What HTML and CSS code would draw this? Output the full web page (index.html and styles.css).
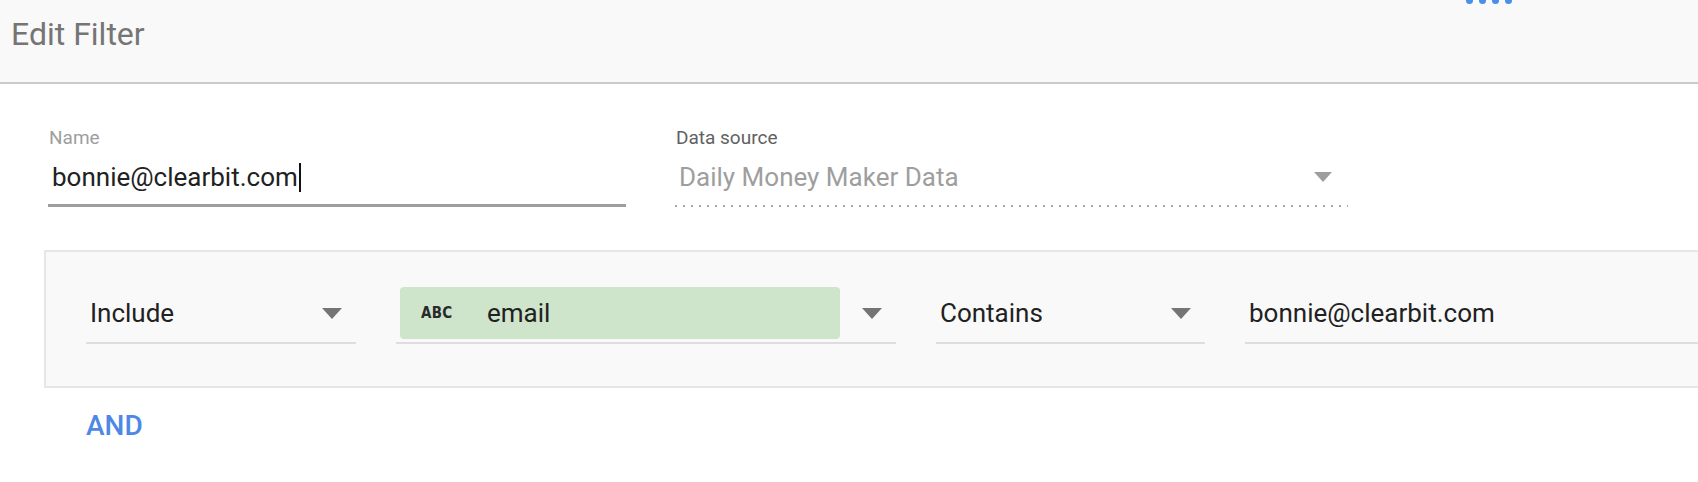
FILE: index.html
```html
<!DOCTYPE html>
<html>
<head>
<meta charset="utf-8">
<title>Edit Filter</title>
<link rel="stylesheet" href="styles.css">
</head>
<body>
<header class="header">
  <h1 class="title">Edit Filter</h1>
  <div class="loader"><span></span><span></span><span></span><span></span></div>
</header>

<section class="fields">
  <div class="field name-field">
    <div class="field-label">Name</div>
    <div class="field-input"><span class="value">bonnie@clearbit.com</span><span class="caret"></span></div>
  </div>
  <div class="field source-field">
    <div class="field-label dark">Data source</div>
    <div class="field-input select">
      <span class="value muted">Daily Money Maker Data</span>
      <span class="tri tri-light"></span>
    </div>
    <div class="dotted"></div>
  </div>
</section>

<section class="filter-box">
  <div class="clause">
    <div class="sel sel-include"><span class="sel-text">Include</span><span class="tri"></span></div>
    <div class="sel sel-field">
      <span class="chip"><span class="abc">ABC</span><span class="chip-text">email</span></span>
      <span class="tri"></span>
    </div>
    <div class="sel sel-op"><span class="sel-text">Contains</span><span class="tri"></span></div>
    <div class="sel sel-value"><span class="sel-text">bonnie@clearbit.com</span></div>
  </div>
</section>

<div class="and">AND</div>
</body>
</html>
```

FILE: styles.css
```css
html, body {
  margin: 0;
  padding: 0;
}
body {
  background: #ffffff;
  font-family: Roboto, "Noto Sans", sans-serif;
  color: #212121;
  overflow: hidden;
  width: 1698px;
  height: 482px;
}

.header {
  position: relative;
  height: 84px;
  box-sizing: border-box;
  background: #f9f9f9;
  border-bottom: 2px solid #cacaca;
  padding: 15px 11px 0;
}
.title {
  margin: 0;
  font-weight: 400;
  font-size: 32px;
  line-height: 38px;
  color: #757575;
}
.loader {
  position: absolute;
  left: 1466px;
  top: -3px;
  display: flex;
  gap: 6px;
}
.loader span {
  width: 7px;
  height: 7px;
  border-radius: 50%;
  background: #4a8fe7;
}

.fields {
  display: flex;
  gap: 49px;
  padding-left: 48px;
  margin-top: 42px;
}
.field-label {
  font-size: 19px;
  line-height: 24px;
  height: 24px;
  color: #9e9e9e;
  padding-left: 1px;
}
.field-label.dark {
  color: #616161;
}
.field-input {
  display: flex;
  align-items: center;
  height: 54px;
  font-size: 26px;
  padding-left: 4px;
}
.name-field {
  width: 578px;
}
.name-field .field-input {
  border-bottom: 3px solid #9e9e9e;
}
.caret {
  display: inline-block;
  width: 2px;
  height: 29px;
  background: #111;
  margin-left: 1px;
}
.source-field {
  width: 673px;
}
.select {
  justify-content: space-between;
  padding-right: 16px;
}
.value.muted {
  color: #9e9e9e;
}
.dotted {
  height: 2px;
  margin-top: 1px;
  background-image: repeating-linear-gradient(to right, #a8a8a8 0 2px, transparent 2px 8px);
}

.tri {
  width: 0;
  height: 0;
  border-left: 10px solid transparent;
  border-right: 10px solid transparent;
  border-top: 11px solid #757575;
  flex: none;
}
.tri-light {
  border-top-color: #9e9e9e;
  border-left-width: 9px;
  border-right-width: 9px;
  border-top-width: 10px;
}

.filter-box {
  margin-top: 43px;
  margin-left: 44px;
  margin-right: -40px;
  height: 138px;
  box-sizing: border-box;
  background: #f9f9f9;
  border: 2px solid #e6e6e6;
  padding: 35px 0 0 40px;
}
.clause {
  display: flex;
  gap: 40px;
}
.sel {
  display: flex;
  align-items: center;
  justify-content: space-between;
  height: 52px;
  padding-bottom: 3px;
  border-bottom: 2px solid #dedede;
  font-size: 26px;
  color: #212121;
  box-sizing: content-box;
}
.sel-text {
  padding-left: 4px;
}
.sel-include {
  width: 256px;
  padding-right: 14px;
}
.sel-field {
  width: 486px;
  padding-right: 14px;
}
.sel-op {
  width: 255px;
  padding-right: 14px;
}
.sel-value {
  flex: 1;
}
.chip {
  display: flex;
  align-items: center;
  width: 440px;
  height: 52px;
  margin-left: 4px;
  background: #cfe5cb;
  border-radius: 4px;
}
.abc {
  font-family: "DejaVu Sans Condensed", "DejaVu Sans", sans-serif;
  font-weight: 700;
  font-size: 15px;
  letter-spacing: 0.3px;
  color: #2a2a2a;
  margin-left: 21px;
  width: 66px;
}
.chip-text {
  color: #212121;
}

.and {
  margin: 22px 0 0 86px;
  font-size: 28px;
  line-height: 32px;
  font-weight: 500;
  color: #4d88e6;
}
```
